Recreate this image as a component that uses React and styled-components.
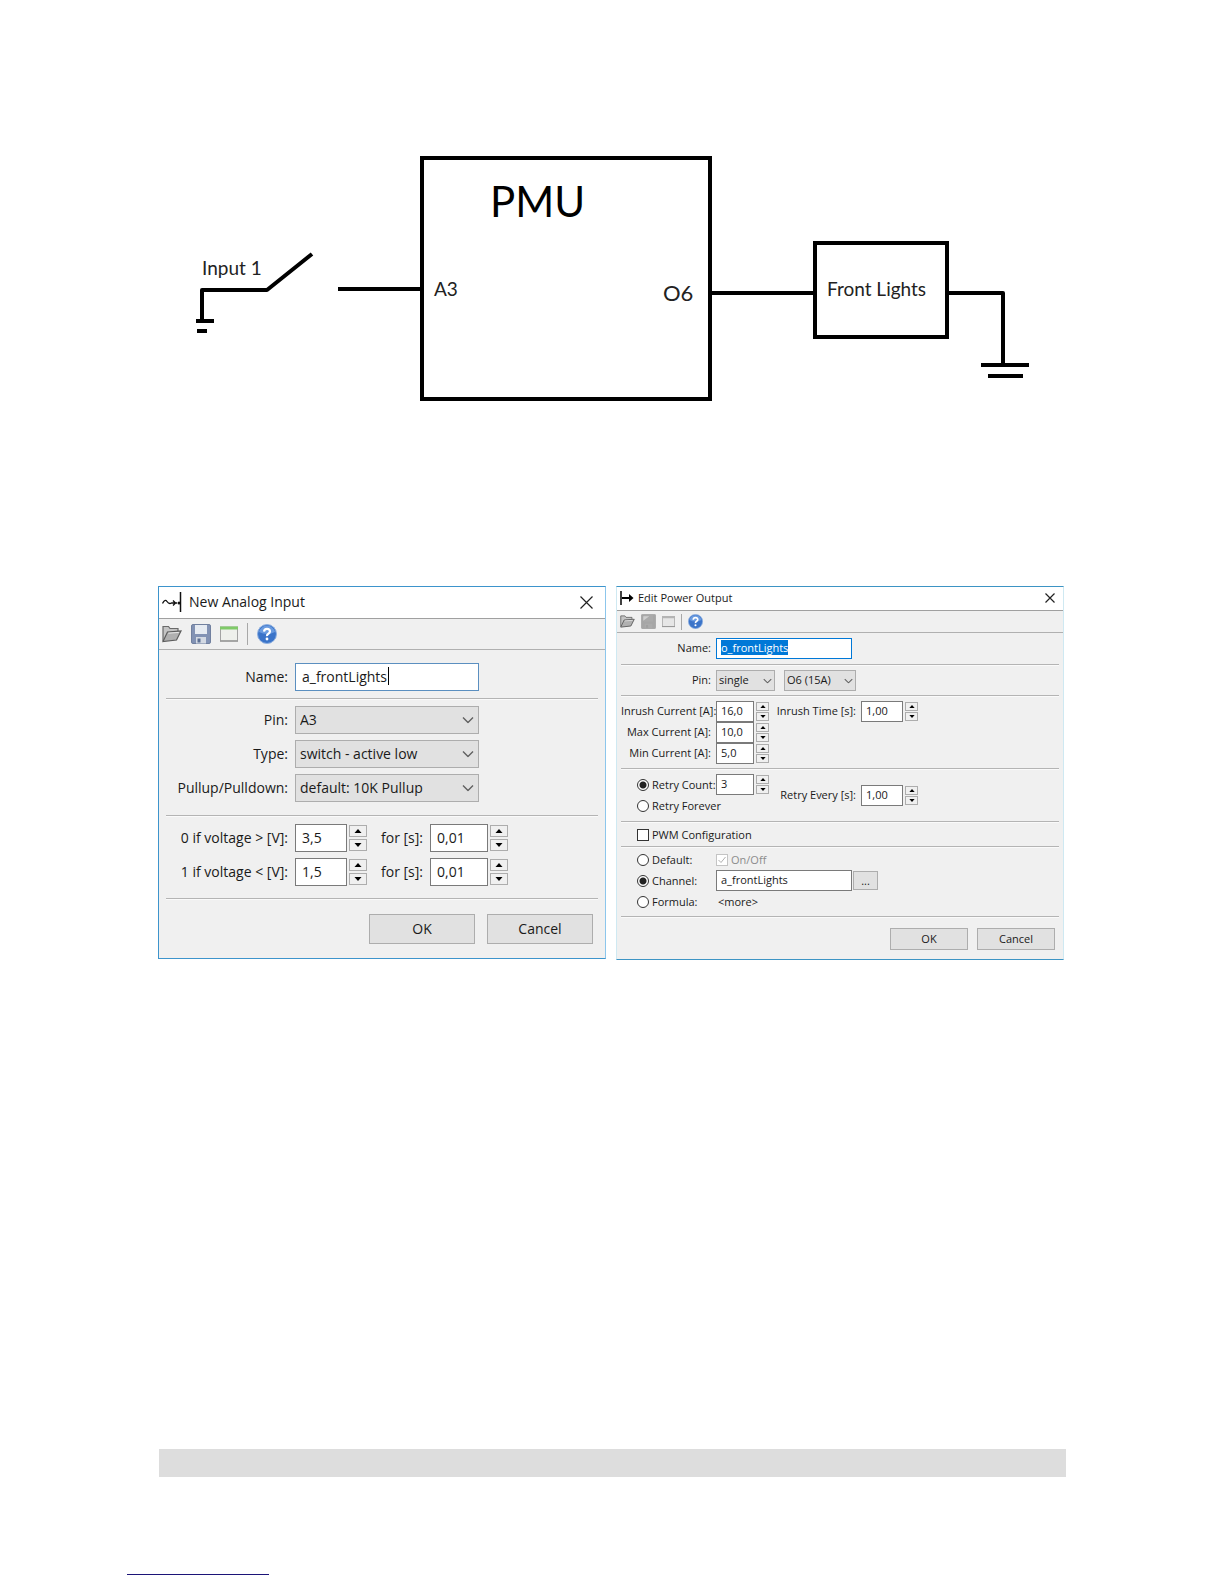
import { useEffect, useId, useRef } from "react";
import styled, { createGlobalStyle, css, ThemeProvider } from "styled-components";

const GlobalStyle = createGlobalStyle`
    *, *::before, *::after {
        box-sizing: border-box;
    }

    body {
        margin: 0;
        background: #ffffff;
        color: #1a1a1a;
        font-family: "Open Sans", "Noto Sans", sans-serif;
    }

    input, select, button {
        font: inherit;
        color: inherit;
    }
`;

// The two dialogs share their parts and differ only in scale
const regular = {
    font: 14,
    edge: "#3d94cc",
    side: "#8cc6ec",
    titleHeight: 32,
    titleGap: 7,
    closeSize: 13,
    closePad: 12,
    barHeight: 31,
    icon: 20,
    iconGap: 9,
    sepHeight: 22,
    inset: 7,
    labelWidth: 122,
    labelGap: 7,
    control: 28,
    textPad: 6,
    selectPad: 4,
    chevron: 12,
    spinWidth: 18,
    spinHeight: 12,
    spinGap: 2,
    arrow: 8,
    buttonWidth: 106,
    buttonHeight: 30,
    buttonGap: 12,
    footer: "15px 12px 14px",
    focus: "#5b8fc0",
};

const compact = {
    font: 11,
    edge: "#3d94c4",
    side: "#cfe9f2",
    titleHeight: 24,
    titleGap: 4,
    closeSize: 10,
    closePad: 8,
    barHeight: 22,
    icon: 15,
    iconGap: 6,
    sepHeight: 16,
    inset: 4,
    labelWidth: 90,
    labelGap: 5,
    control: 21,
    textPad: 4,
    selectPad: 2,
    chevron: 9,
    spinWidth: 13,
    spinHeight: 9,
    spinGap: 1,
    arrow: 6,
    buttonWidth: 78,
    buttonHeight: 22,
    buttonGap: 9,
    footer: "11px 8px 9px",
    focus: "#0078d7",
};

const Page = styled.main`
    display: flex;
    flex-direction: column;
    padding: 152px 158px 8px;
`;

const Diagram = styled.svg`
    display: block;
    width: 100%;
    height: auto;
    margin-bottom: 182px;
    font-family: Lato, "Open Sans", sans-serif;
    fill: #222222;
`;

const Dialogs = styled.div`
    display: grid;
    grid-template-columns: 1fr 1fr;
    gap: 10px;
    align-items: start;
    padding-right: 2px;
`;

const FooterBar = styled.div`
    height: 28px;
    margin: 489px 0 0 1px;
    background: #dddddd;
`;

const FooterRule = styled.hr`
    width: 142px;
    margin: 97px 0 0 -31px;
    border: 0;
    border-top: 1px solid #1c1478;
`;

const Window = styled.form`
    background: #f0f0f0;
    border: 1px solid ${({ theme }) => theme.edge};
    border-right-color: ${({ theme }) => theme.side};
    border-left-color: ${({ theme, $strong }) => ($strong ? theme.edge : theme.side)};
    font-size: ${({ theme }) => theme.font}px;
    line-height: ${({ theme }) => theme.font + 3}px;
`;

const TitleBar = styled.header`
    display: flex;
    align-items: center;
    gap: ${({ theme }) => theme.titleGap}px;
    height: ${({ theme }) => theme.titleHeight}px;
    padding: 0 ${({ theme }) => theme.closePad}px 1px 3px;
    background: #ffffff;
    border-bottom: 1px solid #a0a0a0;

    h2 {
        flex: 1;
        margin: 0;
        padding-bottom: 1px;
        font-size: inherit;
        font-weight: 400;
    }
`;

const PlainButton = styled.button`
    display: flex;
    padding: 0;
    background: none;
    border: 0;
`;

const ToolBar = styled.div`
    display: flex;
    align-items: center;
    gap: ${({ theme }) => theme.iconGap}px;
    height: ${({ theme }) => theme.barHeight}px;
    padding: 0 3px;
    border-bottom: 1px solid #b0b0b0;
`;

const ToolDivider = styled.span`
    width: 1px;
    height: ${({ theme }) => theme.sepHeight}px;
    background: #a8a8a8;
`;

const Section = styled.div`
    display: flex;
    align-items: ${({ $align }) => $align || "flex-start"};
    margin: 0 ${({ theme }) => theme.inset}px;
    padding: ${({ $pad }) => $pad};
    border-bottom: 1px solid #b4b4b4;
    box-shadow: 0 1px 0 #fafafa;
`;

const Rows = styled.div`
    display: flex;
    flex-direction: column;
    gap: ${({ $gap }) => $gap || 0}px;
`;

const Row = styled.div`
    display: flex;
    align-items: center;
    height: ${({ theme }) => theme.control}px;
`;

const FieldLabel = styled.label`
    width: ${({ theme, $width }) => $width || theme.labelWidth}px;
    margin-right: ${({ theme }) => theme.labelGap}px;
    padding-bottom: 1px;
    text-align: right;
    white-space: nowrap;
`;

const TextBox = styled.input`
    width: ${({ $width }) => $width}px;
    height: ${({ theme }) => theme.control}px;
    padding: 0 0 2px ${({ theme }) => theme.textPad}px;
    background: #ffffff;
    border: 1px solid ${({ theme, $active }) => ($active ? theme.focus : "#7a7a7a")};
    border-radius: 0;
    outline: none;

    &::selection {
        background: #0078d7;
        color: #ffffff;
    }
`;

const CaretBox = styled.span`
    position: relative;
    display: flex;
`;

const Caret = styled.span`
    position: absolute;
    top: 4px;
    left: 93px;
    width: 1px;
    height: 18px;
    background: #000000;
`;

const SelectBox = styled.span`
    position: relative;
    display: flex;
    width: ${({ $width }) => $width}px;
    margin-right: 9px;

    select {
        appearance: none;
        width: 100%;
        height: ${({ theme }) => theme.control}px;
        padding: 0 0 1px ${({ theme }) => theme.selectPad}px;
        background: #e1e1e1;
        border: 1px solid #adadad;
        border-radius: 0;
    }

    svg {
        position: absolute;
        top: 50%;
        right: ${({ theme }) => theme.textPad - 1}px;
        width: ${({ theme }) => theme.chevron}px;
        transform: translateY(-50%);
        pointer-events: none;
    }
`;

const SpinButtons = styled.span`
    display: flex;
    flex-direction: column;
    gap: ${({ theme }) => theme.spinGap}px;
    margin-left: 2px;

    button {
        display: flex;
        align-items: center;
        justify-content: center;
        width: ${({ theme }) => theme.spinWidth}px;
        height: ${({ theme }) => theme.spinHeight}px;
        padding: 0;
        background: #f0f0f0;
        border: 1px solid #adadad;
    }

    svg {
        width: ${({ theme }) => theme.arrow}px;
        height: ${({ theme }) => theme.arrow / 2}px;
    }
`;

const Option = styled.label`
    display: flex;
    align-items: center;
    gap: 3px;
    width: ${({ $wide }) => ($wide ? "auto" : "95px")};
    padding-left: ${({ $indent }) => $indent || 0}px;
    white-space: nowrap;
    color: ${({ $muted }) => ($muted ? "#8c8c8c" : "inherit")};
`;

const mark = css`
    appearance: none;
    flex: none;
    width: 12px;
    height: 12px;
    margin: 0;
    background: #ffffff;
    border: 1px solid #333333;
`;

const Radio = styled.input.attrs({ type: "radio" })`
    ${mark}
    border-radius: 50%;

    &:checked {
        background: radial-gradient(circle, #222222 3px, #ffffff 4px);
    }
`;

const CheckBox = styled.input.attrs({ type: "checkbox" })`
    ${mark}

    &:disabled {
        border-color: #c4c4c4;
    }
`;

const CheckWrap = styled.span`
    position: relative;
    display: flex;

    svg {
        position: absolute;
        top: 2px;
        left: 2px;
    }
`;

const MoreText = styled.span`
    padding-left: 2px;
`;

const BrowseButton = styled.button`
    width: 25px;
    height: 19px;
    margin-left: 1px;
    padding: 0;
    line-height: 12px;
    background: #e1e1e1;
    border: 1px solid #adadad;
`;

const Footer = styled.footer`
    display: flex;
    justify-content: flex-end;
    gap: ${({ theme }) => theme.buttonGap}px;
    padding: ${({ theme }) => theme.footer};
`;

const PushButton = styled.button`
    width: ${({ theme }) => theme.buttonWidth}px;
    height: ${({ theme }) => theme.buttonHeight}px;
    padding: 0 0 1px;
    background: #e1e1e1;
    border: 1px solid #adadad;
`;

const FolderIcon = ({ size }) => (
    <svg width={size} height={size} viewBox="0 0 20 20">
        <path d="M1 17V2.500h5.500l1.500 2h8V8" fill="#c4c4c4" stroke="#6a6a6a" strokeWidth="1.200" />
        <path d="M1 17.500L5.500 8l13.500-1-4.500 9z" fill="#b0b0b0" stroke="#5c5c5c" strokeWidth="1.200" />
        <path d="M6.300 9.200l10.600-.8" stroke="#e8e8e8" />
    </svg>
);

const SaveIcon = ({ size, disabled }) => (
    <svg width={size} height={size} viewBox="0 0 20 20">
        <rect x="0.500" y="0.500" width="19" height="19" rx="1.500" fill={disabled ? "#a6a6a6" : "#8292b4"} stroke={disabled ? "#a0a0a0" : "#71809f"} />
        <path d="M4 1h12v9H4z" fill={disabled ? "#aaaaaa" : "#e6ebf2"} />
        <path d="M5 13h10v6.500H5z" fill={disabled ? "#ababab" : "#d3d9e3"} />
        <path d="M6.500 14.500h3v4h-3z" fill={disabled ? "#a0a0a0" : "#5d7094"} />
        {disabled && <path d="M3 3h8L3 9z" fill="#cfcfcf" />}
    </svg>
);

const PanelIcon = ({ size, disabled }) => (
    <svg width={size} height={size} viewBox="0 0 18 18">
        <rect x="0.500" y="2" width="17" height="14" fill={disabled ? "#e6e6e6" : "#eef0ec"} stroke="#a3a3a3" />
        <path d="M0 1.500h18v3H0z" fill={disabled ? "#b4b4b4" : "#7fca68"} />
        <path d="M0 16h18" stroke="#999" strokeWidth="1.500" />
    </svg>
);

const HelpIcon = ({ size }) => (
    <svg width={size} height={size} viewBox="0 0 20 20">
        <circle cx="10" cy="10" r="9.500" fill="#3b74c9" stroke="#8fb0e0" />
        <path d="M2 8a8.200 8.200 0 0 1 16 0q-8 4-16 0z" fill="#6a9be0" />
        <path d="M7 7.600q.2-2.800 3-2.800t3 2.500q0 1.500-1.600 2.400T10 12.200" fill="none" stroke="#fff" strokeWidth="2.200" />
        <circle cx="10" cy="15" r="1.400" fill="#fff" />
    </svg>
);

const AnalogIcon = () => (
    <svg width="20" height="20" viewBox="0 0 20 20" fill="none" stroke="#111">
        <path d="M0.500 11.500q2.500-5 4.500-2t4.500 1.500H15M11 8.500l2.500 2.500-2.500 2.500" strokeWidth="1.300" />
        <path d="M18.500 0v20" strokeWidth="1.500" />
        <circle cx="17" cy="11" r="1.500" fill="#111" stroke="none" />
    </svg>
);

const OutputIcon = () => (
    <svg width="14" height="14" viewBox="0 0 14 14">
        <path d="M1 0v14" stroke="#000" strokeWidth="1.500" />
        <path d="M2 6h7V3l4.500 4L9 11V8H2z" fill="#000" />
    </svg>
);

const CloseIcon = ({ size }) => (
    <svg width={size} height={size} viewBox={`0 0 ${size} ${size}`}>
        <path d={`M0.500 0.500L${size - 0.5} ${size - 0.5}M${size - 0.5} 0.500L0.500 ${size - 0.5}`} stroke="#222" strokeWidth="1.200" />
    </svg>
);

const Arrow = ({ down }) => (
    <svg viewBox="0 0 8 4">
        <path d={down ? "M0.500 0h7L4 4z" : "M0.500 4h7L4 0z"} fill="#000" />
    </svg>
);

const SpinField = ({ label, name, value, width, labelWidth }) => {
    const id = useId();
    return (
        <>
            {label && <FieldLabel htmlFor={id} $width={labelWidth}>{label}</FieldLabel>}
            <TextBox id={id} aria-label={name} defaultValue={value} $width={width} />
            <SpinButtons>
                <button type="button" aria-label="Increase"><Arrow /></button>
                <button type="button" aria-label="Decrease"><Arrow down /></button>
            </SpinButtons>
        </>
    );
};

const Select = ({ id, label, value, width }) => (
    <SelectBox $width={width}>
        <select id={id} aria-label={label} defaultValue={value}>
            <option>{value}</option>
        </select>
        <svg viewBox="0 0 12 7">
            <path d="M1 1l5 5 5-5" fill="none" stroke="#606060" strokeWidth="1.400" />
        </svg>
    </SelectBox>
);

const SelectRow = ({ label, value, width }) => {
    const id = useId();
    return (
        <Row>
            <FieldLabel htmlFor={id}>{label}</FieldLabel>
            <Select id={id} value={value} width={width} />
        </Row>
    );
};

const DialogWindow = ({ theme, title, icon, strong, disabled, children }) => (
    <ThemeProvider theme={theme}>
        <Window $strong={strong} onSubmit={(e) => e.preventDefault()}>
            <TitleBar>
                {icon}
                <h2>{title}</h2>
                <PlainButton type="button" aria-label="Close"><CloseIcon size={theme.closeSize} /></PlainButton>
            </TitleBar>
            <ToolBar>
                <PlainButton type="button" aria-label="Open"><FolderIcon size={theme.icon} /></PlainButton>
                <PlainButton type="button" aria-label="Save" disabled={disabled}><SaveIcon size={theme.icon} disabled={disabled} /></PlainButton>
                <PlainButton type="button" aria-label="Panel" disabled={disabled}><PanelIcon size={theme.icon - 2} disabled={disabled} /></PlainButton>
                <ToolDivider />
                <PlainButton type="button" aria-label="Help"><HelpIcon size={theme.icon} /></PlainButton>
            </ToolBar>
            {children}
            <Footer>
                <PushButton type="submit">OK</PushButton>
                <PushButton type="button">Cancel</PushButton>
            </Footer>
        </Window>
    </ThemeProvider>
);

const AnalogInputDialog = () => (
    <DialogWindow theme={regular} title="New Analog Input" icon={<AnalogIcon />} strong>
        <Section $pad="13px 0 7px">
            <Row>
                <FieldLabel htmlFor="analog-name">Name:</FieldLabel>
                <CaretBox>
                    <TextBox id="analog-name" defaultValue="a_frontLights" $width={184} $active />
                    <Caret />
                </CaretBox>
            </Row>
        </Section>
        <Section $pad="7px 0 13px">
            <Rows $gap={6}>
                <SelectRow label="Pin:" value="A3" width={184} />
                <SelectRow label="Type:" value="switch - active low" width={184} />
                <SelectRow label="Pullup/Pulldown:" value="default: 10K Pullup" width={184} />
            </Rows>
        </Section>
        <Section $pad="8px 0 12px">
            <Rows $gap={6}>
                <Row>
                    <SpinField label="0 if voltage > [V]:" value="3,5" width={52} />
                    <SpinField label="for [s]:" value="0,01" width={58} labelWidth={56} />
                </Row>
                <Row>
                    <SpinField label="1 if voltage < [V]:" value="1,5" width={52} />
                    <SpinField label="for [s]:" value="0,01" width={58} labelWidth={56} />
                </Row>
            </Rows>
        </Section>
    </DialogWindow>
);

const PowerOutputDialog = () => {
    const nameRef = useRef(null);

    useEffect(() => {
        nameRef.current.focus();
        nameRef.current.select();
    }, []);

    return (
        <DialogWindow theme={compact} title="Edit Power Output" icon={<OutputIcon />} disabled>
            <Section $pad="5px 0">
                <Row>
                    <FieldLabel htmlFor="output-name">Name:</FieldLabel>
                    <TextBox id="output-name" ref={nameRef} defaultValue="o_frontLights" $width={136} $active />
                </Row>
            </Section>
            <Section $pad="5px 0 4px">
                <Row>
                    <FieldLabel htmlFor="output-pin">Pin:</FieldLabel>
                    <Select id="output-pin" value="single" width={59} />
                    <Select label="Output pin" value="O6 (15A)" width={72} />
                </Row>
            </Section>
            <Section $pad="5px 0 4px">
                <Rows>
                    <Row><SpinField label="Inrush Current [A]:" value="16,0" width={38} /></Row>
                    <Row><SpinField label="Max Current [A]:" value="10,0" width={38} /></Row>
                    <Row><SpinField label="Min Current [A]:" value="5,0" width={38} /></Row>
                </Rows>
                <Row><SpinField label="Inrush Time [s]:" value="1,00" width={42} labelWidth={87} /></Row>
            </Section>
            <Section $pad="5px 0" $align="center">
                <Rows>
                    <Row>
                        <Option $indent={16}><Radio name="retry" defaultChecked />Retry Count:</Option>
                        <SpinField name="Retry count" value="3" width={38} />
                    </Row>
                    <Row>
                        <Option $indent={16}><Radio name="retry" />Retry Forever</Option>
                    </Row>
                </Rows>
                <Row><SpinField label="Retry Every [s]:" value="1,00" width={42} labelWidth={87} /></Row>
            </Section>
            <Section $pad="2px 0 1px">
                <Row>
                    <Option $indent={16} $wide><CheckBox />PWM Configuration</Option>
                </Row>
            </Section>
            <Section $pad="2px 0 4px">
                <Rows>
                    <Row>
                        <Option $indent={16}><Radio name="source" />Default:</Option>
                        <Option $wide $muted>
                            <CheckWrap>
                                <CheckBox defaultChecked disabled />
                                <svg width="8" height="8" viewBox="0 0 8 8">
                                    <path d="M0.500 4l2.500 2.500L7.500 1" fill="none" stroke="#b0b0b0" />
                                </svg>
                            </CheckWrap>
                            On/Off
                        </Option>
                    </Row>
                    <Row>
                        <Option $indent={16}><Radio name="source" defaultChecked />Channel:</Option>
                        <TextBox aria-label="Channel name" defaultValue="a_frontLights" $width={136} />
                        <BrowseButton type="button">...</BrowseButton>
                    </Row>
                    <Row>
                        <Option $indent={16}><Radio name="source" />Formula:</Option>
                        <MoreText>&lt;more&gt;</MoreText>
                    </Row>
                </Rows>
            </Section>
        </DialogWindow>
    );
};

const WiringDiagram = () => (
    <Diagram viewBox="158 152 908 252" role="img" aria-label="PMU wiring">
        <g fill="none" stroke="#000" strokeWidth="4">
            {/* switch and its ground */}
            <path d="M312 254L267 290H202V320" strokeLinejoin="round" />
            <path d="M196 321H214M197 331H207" />
            {/* PMU */}
            <rect x="422" y="158" width="288" height="241" />
            <path d="M338 289H422" />
            <path d="M710 293H814" />
            {/* load and its ground */}
            <rect x="815" y="243" width="132" height="94" />
            <path d="M947 293H1003V365" strokeLinejoin="round" />
            <path d="M981 365H1029M988 376H1023" />
        </g>
        <text x="202" y="275" fontSize="19">Input 1</text>
        <text x="434" y="296" fontSize="19">A3</text>
        <text x="663" y="301" fontSize="22">O6</text>
        <text x="827" y="296" fontSize="19">Front Lights</text>
        <text x="490" y="217" fontSize="42" fill="#000">PMU</text>
    </Diagram>
);

const App = () => (
    <>
        <GlobalStyle />
        <Page>
            <WiringDiagram />
            <Dialogs>
                <AnalogInputDialog />
                <PowerOutputDialog />
            </Dialogs>
            <FooterBar />
            <FooterRule />
        </Page>
    </>
);

export default App;
